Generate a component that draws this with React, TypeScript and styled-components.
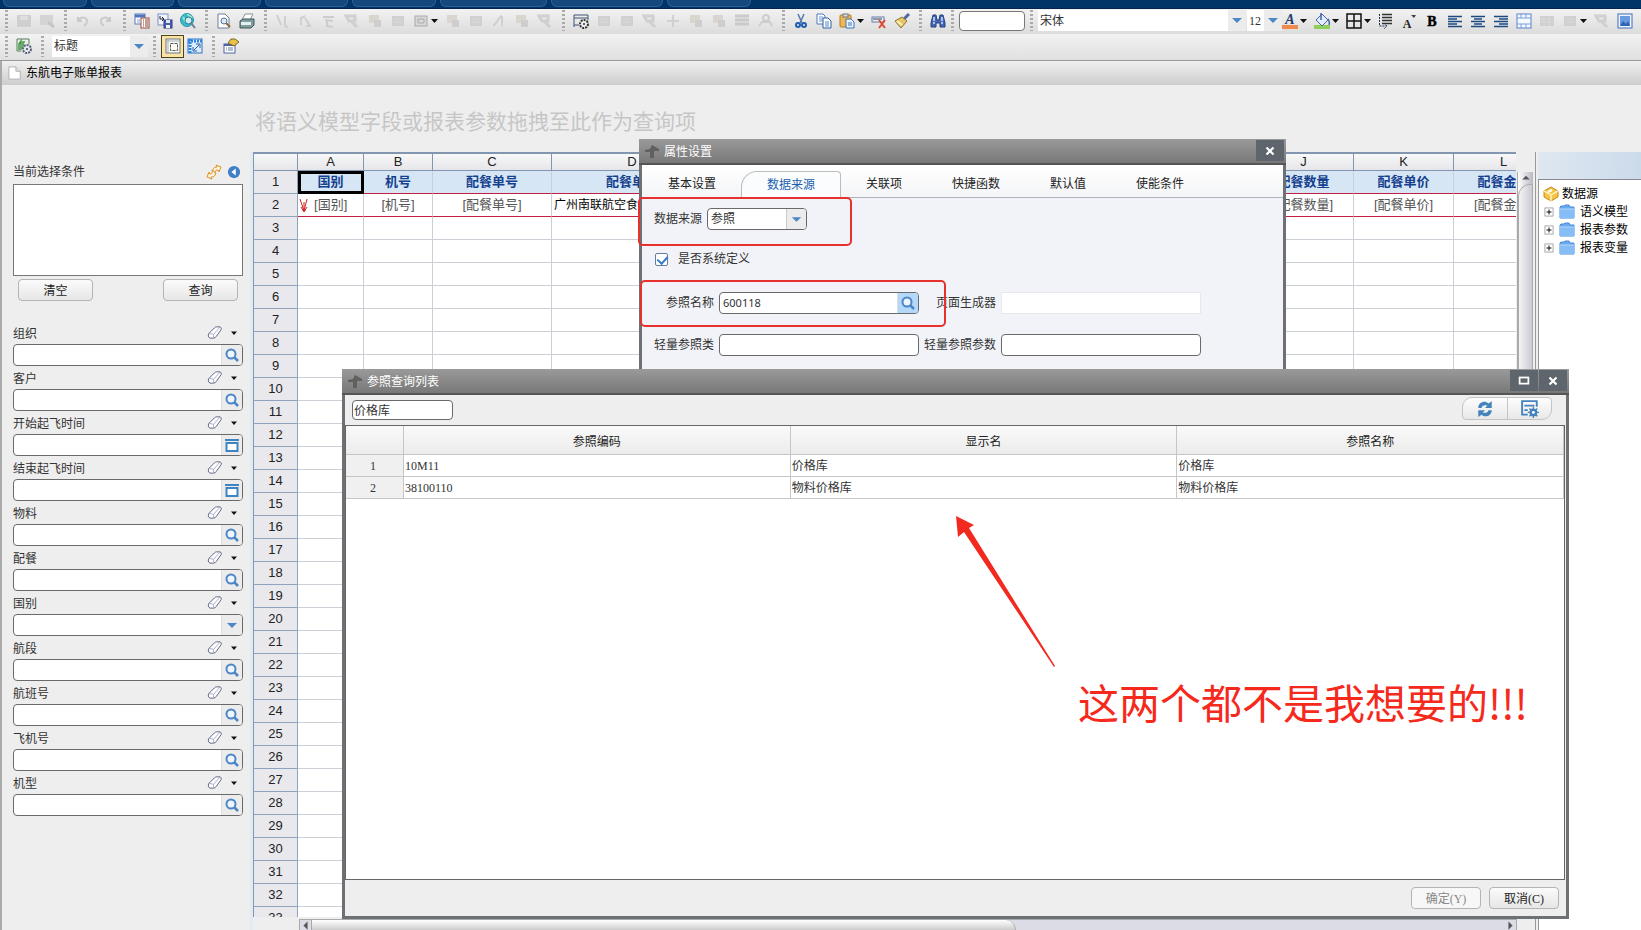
import React from 'react';
import styled, { createGlobalStyle, css } from 'styled-components';

const sans = '"Liberation Sans", "Noto Sans CJK SC", sans-serif';
const song = '"Liberation Serif", "Noto Sans CJK SC", serif';

const GlobalStyle = createGlobalStyle`
  * { box-sizing: border-box; }
  body { margin: 0; background: #eeeeee; font: 12px/16px ${song}; color: #333; overflow: hidden; }
  button, input, select, textarea { font: inherit; color: inherit; margin: 0; padding: 0; }
`;

/* ---------- icons ---------- */

const P = (d: string, stroke = '#333', w = 1, fill = 'none') => (
  <path d={d} stroke={stroke} strokeWidth={w} fill={fill} />
);

const icons: Record<string, React.ReactNode> = {
  save: <><rect x="1" y="2" width="14" height="12" fill="#cfcfcf" /><rect x="4" y="3" width="8" height="4" fill="#dedede" /></>,
  saveAs: <><rect x="1" y="2" width="13" height="10" fill="#d4d4d4" /><path d="M9 9l6 5" stroke="#c6c6c6" strokeWidth="3" /></>,
  undo: P('M3 4v4h4M3 8c3-5 9-4 9 0 0 3-2 4-3 5', '#cacaca', 2),
  redo: P('M12 4v4H8M12 8C9 3 3 4 3 8c0 2 1 4 3 4', '#cacaca', 2),
  fade1: P('M2 2l4 10M10 3v9q0 2 3 2', '#cfcfcf', 2),
  fade2: P('M3 12V5l4-2M7 5l5 8H8', '#cfcfcf', 2),
  fade3: P('M2 4h11M4 7l8 1M6 8v5l6 1', '#cdcdcd', 2),
  fade4: P('M2 3h9v5H5zM7 8l6 6', '#d0d0d0', 3),
  fade5: <><rect x="2" y="2" width="10" height="8" fill="#d9d5cf" /><rect x="7" y="7" width="7" height="7" fill="#cecece" /></>,
  fade6: <><rect x="2" y="3" width="12" height="10" fill="#d0d0d0" /><path d="M4 6h8M4 9h8" stroke="#dadada" /></>,
  fade7: <><rect x="2" y="3" width="12" height="10" fill="#d8d8d8" stroke="#aaa" /><path d="M5 6h6v4H5z" fill="none" stroke="#aaa" /></>,
  fade8: P('M2 12c4 0 5-8 9-9M11 3v10', '#d0d0d0', 2),
  fade9: P('M8 2v12M2 8h12', '#d0d0d0', 2),
  lines: P('M1 3h14M1 7h14M1 11h14', '#cacaca', 3),
  person: <><circle cx="9" cy="5" r="3" fill="none" stroke="#cdcdcd" strokeWidth="2" /><path d="M2 13l3-4h8l2 4" stroke="#cdcdcd" strokeWidth="2" fill="none" /></>,
  report: <><rect x="1" y="1" width="10" height="10" fill="#fff" stroke="#5c78b8" /><path d="M1 3h10" stroke="#4f75c4" strokeWidth="3" /><path d="M3 7h3M3 9h3" stroke="#8ca4d4" /><rect x="7" y="5" width="8" height="10" fill="#fff" stroke="#8f4a3a" /><path d="M9 7h1m1 0h3M9 9h1m1 0h3M9 11h1m1 0h3M9 13h1m1 0h3" stroke="#8d3a2a" /></>,
  exportDisk: <><rect x="1" y="1" width="10" height="11" fill="#eef3fc" stroke="#7c90c0" /><path d="M3 3v3h4M5 4l2 2-2 2" stroke="#222" fill="none" /><rect x="7" y="7" width="8" height="8" fill="#4b5cae" stroke="#333c80" /><rect x="9" y="7" width="4" height="3" fill="#dfe4f6" /><rect x="9" y="12" width="4" height="3" fill="#f3f3f3" /></>,
  globe: <><circle cx="7" cy="7" r="6.500" fill="#38b9cc" stroke="#2897ae" /><path d="M3 4c2 2 1 4 3 5M8 1c0 3 3 2 4 4" stroke="#9ce6c0" strokeWidth="2" fill="none" /><circle cx="8.500" cy="7.500" r="3.500" fill="#c9eef4" stroke="#2a7690" /><path d="M11 10l4 5" stroke="#6b7b8d" strokeWidth="2" /></>,
  preview: <><path d="M2 1h7l4 4v10H2z" fill="#fff" stroke="#6e7d99" /><circle cx="8" cy="8" r="3" fill="#d9ecf7" stroke="#5b7390" /><path d="M10 10l4 4" stroke="#8b6b3c" strokeWidth="2" /></>,
  print: <><path d="M6 1h8l-3 6H3z" fill="#fff" stroke="#8a949c" /><path d="M1 8l3-2h11v6l-3 3H1z" fill="#7f9d9d" stroke="#3d5558" /><path d="M2 9h10v3H2z" fill="#e4f0ee" /></>,
  windowGear: <><path d="M1 14V2h14v5M1 5h14M1 12h5" stroke="#3d5478" fill="none" /><circle cx="11" cy="11" r="4" fill="#eee" stroke="#333" strokeDasharray="2 1" strokeWidth="2" /><circle cx="11" cy="11" r="1" fill="#333" /></>,
  cut: <><path d="M5 1l4 9M11 1L7 10" stroke="#5578a8" strokeWidth="1.500" /><circle cx="5" cy="12" r="2" fill="none" stroke="#1f5fae" strokeWidth="2" /><circle cx="11" cy="12" r="2" fill="none" stroke="#1f5fae" strokeWidth="2" /></>,
  copy: <><path d="M1 1h6l2 2v8H1z" fill="#fff" stroke="#4d78b8" /><path d="M3 4h4M3 6h4M3 8h4" stroke="#6f93cc" /><path d="M7 5h5l3 3v7H7z" fill="#fff" stroke="#2d5fa8" /><path d="M9 9h4M9 11h4M9 13h4" stroke="#5b86c8" /></>,
  paste: <><rect x="1" y="2" width="11" height="12" rx="1" fill="#f0b653" stroke="#b07a23" /><rect x="4" y="1" width="5" height="3" fill="#d8dce2" stroke="#777" /><path d="M7 6h5l3 3v6H7z" fill="#eaf4ff" stroke="#3b74bc" /><path d="M9 10h4M9 12h4" stroke="#3b74bc" /></>,
  removeRow: <><rect x="1" y="4" width="12" height="5" fill="#e9eff8" stroke="#6a7da0" /><path d="M2 6h9" stroke="#33425e" /><path d="M8 7l6 8M14 7l-6 8" stroke="#dc4a30" strokeWidth="2" /></>,
  brush: <><path d="M15 1l-5 5" stroke="#4d67a4" strokeWidth="3" /><path d="M8 4l5 4-6 7-6-7z" fill="#e5c768" stroke="#8d7630" /><path d="M3 8l5 4" stroke="#fff3bb" strokeWidth="2" /></>,
  find: <><path d="M3 2h3l1 5h2l1-5h3l2 8v4h-5v-4H6v4H1v-4z" fill="#4567b4" stroke="#24407f" /><path d="M3 10h2M11 10h2M4 4v4M12 4v4" stroke="#cfe0ff" strokeWidth="1.500" /></>,
  fontColor: <><text x="8" y="11" textAnchor="middle" fontSize="14" fontWeight="bold" fontStyle="italic" fill="#1d3b6c" fontFamily="Liberation Serif">A</text><rect y="12" width="16" height="4" fill="#f08a4c" /></>,
  fillColor: <><rect y="12" width="16" height="4" fill="#8fd05a" /><path d="M8 1l6 6-6 6-6-6z" fill="#e2ecfb" stroke="#4667a5" /><path d="M7 0v7M14 6q2 3 1 6" stroke="#4667a5" strokeWidth="1.500" /></>,
  border: P('M1 1h14v14H1zM8 1v14M1 8h14', '#111', 1.5),
  spacing: <><path d="M4 1.500h10M4 4.500h10M4 7.500h10M4 10.500h10" stroke="#333" strokeWidth="1.500" /><path d="M1.500 1v12H8M6 10l3 3-3 3" stroke="#1d2f57" strokeDasharray="2 1" fill="none" /></>,
  superA: <><text x="6" y="15" textAnchor="middle" fontSize="12" fontWeight="bold" fill="#222" fontFamily="Liberation Serif">A</text><path d="M10 2h5l-2 3z" fill="#444" /></>,
  bold: <text x="8" y="13" textAnchor="middle" fontSize="14" fontWeight="bold" fill="#000" stroke="#000" strokeWidth="0.5" fontFamily="Liberation Serif">B</text>,
  left: P('M1 3.500h14M1 6h9M1 8.500h14M1 11h9M1 13.500h14', '#1d4a80', 1.3),
  center: P('M1 3.500h14M4 6h8M1 8.500h14M4 11h8M1 13.500h14', '#1d4a80', 1.3),
  right: P('M1 3.500h14M6 6h9M1 8.500h14M6 11h9M1 13.500h14', '#1d4a80', 1.3),
  cells: <><rect x="1" y="1" width="14" height="14" fill="#f4f8ff" stroke="#5b82cc" /><path d="M1 5h14M1 11h14M5 1v4M10 1v4M5 11v4M10 11v4" stroke="#7b9ee0" /></>,
  gridOff: <><rect x="1" y="3" width="14" height="10" fill="#cfcfcf" /><path d="M1 6h14M1 9h14M5 3v10M10 3v10" stroke="#dadada" /></>,
  picture: <><rect x="1" y="1" width="14" height="14" fill="#eef5ff" stroke="#3c6db8" /><rect x="3" y="3" width="10" height="10" fill="#6a9be0" /><path d="M3 13l3-5 3 3 2-3 2 5z" fill="#2f62b3" /></>,
  chartGear: <><path d="M1 1h12v5M1 1v12h4" stroke="#5a7a5c" fill="none" /><path d="M3 12V6l2-3v9M7 10V4h2" stroke="#3c9a3e" strokeWidth="1.500" fill="none" /><circle cx="11" cy="11" r="4" fill="#e7e9f2" stroke="#555e78" strokeDasharray="2 1" strokeWidth="2" /><circle cx="11" cy="11" r="1" fill="#444" /></>,
  frame: <><rect x="1" y="1" width="14" height="14" fill="#fdfcf4" stroke="#6c7688" /><path d="M1 3h14M3 1v14" stroke="#a2abbb" /><rect x="5.500" y="5.500" width="7" height="7" fill="none" stroke="#555" strokeDasharray="3 1" /></>,
  freeze: <><rect x="1" y="1" width="14" height="14" fill="#dcecff" stroke="#2f74c6" /><path d="M1 3h14M3 1v14" stroke="#2f86dc" strokeWidth="3" strokeDasharray="2 1" /><path d="M7 12l5-5M9 6h4v4M6 9v4h4" stroke="#2f5ea0" fill="none" /></>,
  card: <><rect x="1" y="6" width="11" height="9" fill="#fff" stroke="#4c63a4" /><path d="M1 7h11" stroke="#4c63a4" strokeWidth="2" /><path d="M3 10h1m1 0h5M3 12h1m1 0h5" stroke="#6b79a8" /><path d="M5 5l3-4h4l4 3-5 4z" fill="#eac24a" stroke="#7d6420" /></>,
  page: <><path d="M1 1h8l5 5v9H1z" fill="#fff" stroke="#aaa" /><path d="M9 1v5h5" fill="#e4e4e4" stroke="#aaa" /></>,
  search: <><circle cx="7" cy="7" r="4.500" fill="#eef5fc" stroke="#4d86c6" strokeWidth="2" /><path d="M10 10l4 4" stroke="#4d86c6" strokeWidth="2.500" /></>,
  date: <><path d="M1 3h14" stroke="#3d84c0" strokeWidth="2" /><rect x="2.500" y="6" width="11" height="8" fill="#fff" stroke="#3d84c0" strokeWidth="2" /></>,
  caretBlue: <path d="M3 6h10l-5 5z" fill="#4d86c6" />,
  caretUp: <path d="M3 10h10L8 5z" fill="#555" />,
  caretLeft: <path d="M11 2v12L5 8z" fill="#555" />,
  caretRight: <path d="M5 2v12l6-6z" fill="#555" />,
  eraser: <><path d="M2 9l6-6q1-1 2-1h4q2 1 1 3l-5 7q-1 2-3 2H3q-3-2-1-5z" fill="#fdfdff" stroke="#59607c" /><path d="M2 9q2 0 5 1l7-8M7 10v4" stroke="#a7aec8" fill="none" /></>,
  refresh: <><path d="M10 1l5 2-2 5-1-2c-3 0-3 2-2 4l-3-1c-1-4 1-6 4-6z" fill="#fff3d8" stroke="#d9932a" /><path d="M6 15l-5-2 2-5 1 2c3 0 2-2 2-4l3 2c1 4-1 5-4 5z" fill="#fff3d8" stroke="#d9932a" /></>,
  collapse: <><circle cx="8" cy="8" r="7" fill="#3f7fc6" /><path d="M10 4v8L5 8z" fill="#fff" /></>,
  vArrow: P('M2 2l4 12L9 2M6 5v9M3 10l3 5 3-5', '#c22', 1),
  cube: <><path d="M8 1l7 4v6l-7 4-7-4V5z" fill="#f6c445" stroke="#c58c1b" /><path d="M1 5l7 4 7-4M8 9v6" stroke="#fff0b5" fill="none" strokeWidth="1.500" /><path d="M5 6l4-2" stroke="#fff" strokeWidth="2" /></>,
  folder: <><path d="M1 3l1-1h3l1-1h4l1 2h4v11H1z" fill="#6caaf0" stroke="#4b8bd6" /><path d="M1 5h14v9H1z" fill="#86bdf6" /><path d="M1 5h14" stroke="#b5d8fb" /></>,
  plus: <><rect x="1.500" y="1.500" width="13" height="13" fill="#fff" stroke="#777" /><path d="M4 8h8M8 4v8" stroke="#000" strokeWidth="1.500" /></>,
  windowMark: <path d="M8 2l7 4v2h-5v7H6V9H1V7l5-1z" fill="#606060" />,
  close: P('M4 4l8 8M12 4l-8 8', '#fff', 2.5),
  maximize: <rect x="3" y="4" width="10" height="7" fill="none" stroke="#fff" strokeWidth="2" />,
  sync: <path d="M2 7c0-5 6-7 9-4l3-2v6H8l2-2c-2-1-5 0-5 2zM14 9c0 5-6 7-9 4l-3 2V9h6l-2 2c2 1 5 0 5-2z" fill="#4483bd" />,
  formGear: <><path d="M6 13H1V1h13v5M3 5h9M3 9h3" stroke="#4483bd" strokeWidth="1.700" fill="none" /><circle cx="11" cy="11" r="2.500" fill="none" stroke="#4483bd" strokeWidth="2" /><path d="M11 6v10M6 11h10M7.500 7.500l7 7M14.500 7.500l-7 7" stroke="#4483bd" strokeWidth="1.200" /><circle cx="11" cy="11" r="1.300" fill="#fff" /></>,
  caretBlack: <path d="M2 5h12l-6 7z" fill="#111" />,
};

const Svg = styled.svg`display: block; flex: none;`;
const Icon = ({ name, size = 16 }: { name: string; size?: number }) => (
  <Svg width={size} height={size} viewBox="0 0 16 16" fill="none" aria-hidden>{icons[name]}</Svg>
);

/* ---------- top bars ---------- */

const App = styled.div`
  position: relative; display: flex; flex-direction: column; height: 100vh;
  overflow: hidden; background: #eeeeee;
`;
const ModuleTabs = styled.nav`
  display: flex; gap: 4px; height: 9px; padding-left: 3px; flex: none;
  background: #013467; border-bottom: 1px solid #02264f;
`;
const ModuleTab = styled.a<{ $w: number }>`
  width: ${p => p.$w}px; height: 7px; background: #15487c;
  border: 1px solid #2d5f93; border-top: 0; border-radius: 0 0 6px 6px;
`;
const Toolbar = styled.div<{ $tall?: boolean }>`
  display: flex; align-items: center; gap: 7px; flex: none;
  height: ${p => (p.$tall ? 27 : 25)}px; padding: 0 0 2px 5px;
  background: linear-gradient(${p => (p.$tall ? '#f2f2f2, #e0e0e0' : '#f2f2f2, #dcdcdc')});
  ${p => p.$tall && 'border-bottom: 1px solid #999;'}
`;
const Divider = styled.span<{ $tight?: boolean }>`
  width: 3px; height: 21px; flex: none; margin: 0 ${p => (p.$tight ? '-2px' : '1px 0 2px')};
  background: repeating-linear-gradient(#aaa 0 2px, transparent 2px 4px);
  &:first-child { margin-left: 0; }
`;
const ToolButton = styled.button<{ $on?: boolean }>`
  display: flex; align-items: center; gap: 2px; border: 0; background: none; flex: none;
  ${p => p.$on && css`
    width: 23px; height: 23px; justify-content: center; background: #fbe3a4; border: 1px solid #4d431f;
    margin-right: -4px;
  `}
`;
const Caret = () => (
  <Svg width="7" height="4" viewBox="0 0 7 4" aria-hidden><path d="M0 0h7L3.500 4z" fill="#111" /></Svg>
);
const SearchBox = styled.input`
  width: 66px; height: 20px; flex: none; border: 1px solid #777; border-radius: 4px; background: #fff; padding: 0 4px;
`;
const Pick = styled.span<{ $w: number }>`
  position: relative; flex: none; width: ${p => p.$w}px; height: 21px; background: #ececec;
  select {
    appearance: none; width: calc(100% - 18px); height: 100%; border: 0;
    border-radius: 0; background: #fff; padding-left: 2px; display: block;
  }
  svg { position: absolute; right: 1px; top: 2px; pointer-events: none; }
`;
const Picker = ({ label, value, width }: { label: string; value: string; width: number }) => (
  <Pick $w={width}>
    <select aria-label={label}><option>{value}</option></select>
    <Icon name="caretBlue" />
  </Pick>
);
const FontGroup = styled.span`display: flex; gap: 1px; flex: none; margin-right: -7px;`;

const Tool = ({ name, menu, on }: { name: string; menu?: boolean; on?: boolean }) => (
  <ToolButton type="button" aria-label={name} $on={on}><Icon name={name} />{menu && <Caret />}</ToolButton>
);
const tools = (names: string) => names.split(' ').map((n, i) => (
  <Tool key={i} name={n.replace('+', '')} menu={n.endsWith('+')} />
));

const DocumentTitle = styled.header`
  display: flex; align-items: center; gap: 4px; height: 24px; flex: none; padding-left: 6px;
  border-left: 2px solid #aaa; background: linear-gradient(#f0f0f0, #cdcdcd); color: #000;
`;

/* ---------- query sidebar ---------- */

const Body = styled.div`display: flex; flex: 1; min-height: 0; border-left: 2px solid #aaa;`;
const Sidebar = styled.aside`width: 248px; flex: none; padding: 76px 7px 0 11px; overflow: hidden;`;
const SidebarHead = styled.div`
  display: flex; align-items: center; gap: 5px; height: 21px; padding-right: 2px; margin-bottom: 2px;
  label { flex: 1; }
  button { border: 0; background: none; }
`;
const Conditions = styled.textarea`
  display: block; width: 230px; height: 92px; border: 1px solid #777; background: #fff; resize: none;
`;
const ButtonRow = styled.div`display: flex; justify-content: space-between; padding: 3px 5px 0;  width: 230px;`;
const PushButton = styled.button<{ $w: number }>`
  width: ${p => p.$w}px; height: 22px; border: 1px solid #b4b4b4; border-radius: 4px;
  background: linear-gradient(#fbfbfb, #e6e6e6); color: #222; padding-top: 1px;
  &:disabled { color: #888; background: #f7f7f7; }
`;
const Fields = styled.div`margin-top: 21px; width: 230px;`;
const Field = styled.div`height: 45px;`;
const FieldHead = styled.div`
  display: flex; align-items: center; gap: 8px; height: 22px; padding: 0 5px 1px 0;
  label { flex: 1; padding-top: 2px; }
  button { border: 0; background: none; }
`;
const InputWrap = styled.div<{ $w?: number; $hot?: boolean }>`
  display: flex; width: ${p => p.$w ?? 230}px; height: 22px; overflow: hidden;
  border: 1px solid #6a6a6a; border-radius: 4px; background: #fff;
  input { flex: 1; min-width: 0; border: 0; background: none; padding: 0 3px; outline: 0; font-family: "Noto Sans", sans-serif; font-size: 11px; }
  button {
    display: grid; place-items: center; width: 21px; border: 0; border-left: 1px solid #ddd;
    background: ${p => (p.$hot ? '#b4d8fa' : '#ececec')};
  }
`;
const queryFields: [string, string][] = [
  ['组织', 'search'], ['客户', 'search'], ['开始起飞时间', 'date'], ['结束起飞时间', 'date'],
  ['物料', 'search'], ['配餐', 'search'], ['国别', 'caretBlue'], ['航段', 'search'],
  ['航班号', 'search'], ['飞机号', 'search'], ['机型', 'search'],
];

/* ---------- sheet ---------- */

const Work = styled.main`display: flex; flex-direction: column; flex: 1; min-width: 0;`;
const DropHint = styled.p`
  margin: 0; height: 67px; flex: none; padding: 22px 0 0 5px; font: 21px/30px ${sans}; color: #c6c6c6;
`;
const Split = styled.div`display: flex; flex: 1; min-height: 0;`;
const SheetArea = styled.section`
  display: flex; flex-direction: column; flex: 1; min-width: 0; padding-left: 3px;
  background: #e2ebf4; border-right: 1px solid #999;
`;
const SheetRow = styled.div`display: flex; flex: 1; min-height: 0; background: #eeeeee;`;
const Viewport = styled.div`flex: 1; min-width: 0; overflow: hidden; background: #fff;`;
const Sheet = styled.table`
  table-layout: fixed; width: 1300px; border-collapse: separate; border-spacing: 0;
  border-left: 1px solid #8296b0; font: 13px/16px ${sans};
  th, td { padding: 0; text-align: center; overflow: hidden; white-space: nowrap; height: 23px; }
  thead th {
    height: 19px; font-weight: normal; color: #222; background: linear-gradient(#f8f8f8, #e6e6ea);
    border: solid #8296b0; border-width: 2px 1px 1px 0;
  }
  tbody th {
    font-weight: normal; color: #222; background: #e9e9ed; border: solid #8fa3bd; border-width: 0 1px 1px 0;
  }
  td { border: solid #cdcfd6; border-width: 0 1px 1px 0; }
`;
const HeadCell = styled.td<{ $sel?: boolean }>`
  && { background: #d6e6f5; color: #14408e; font-weight: bold; border-bottom-color: #c21f42; }
  ${p => p.$sel && 'outline: 3px solid #000; outline-offset: -3px;'}
`;
const DataCell = styled.td<{ $plain?: boolean }>`
  && { border-bottom: 1px solid #c21f42; color: #555; }
  ${p => p.$plain && '&& { color: #000; font-size: 12px; text-align: left; padding-left: 2px; }'}
  span { display: flex; align-items: center; }
`;
const ScrollV = styled.div`
  width: 16px; flex: none; margin: 20px 2px 0 1px; border-left: 1px solid #aaa;
  background: linear-gradient(90deg, #fff, #b9b9c4);
  svg { margin: 0 auto; }
`;
const Thumb = styled.div`height: 700px; border: 1px solid #aaa; border-radius: 12px 0 0 0; background: linear-gradient(90deg, #f4f4f6, #cacad2);`;
const ScrollH = styled.div`
  display: flex; height: 11px; flex: none; margin: 0 18px 0 46px; border: 1px solid #aaa; border-bottom: 0; background: #dcdce6;
  overflow: hidden;
`;
const ThumbH = styled.div`flex: none; width: 58%; margin-right: auto; border: solid #aaa; border-width: 0 1px; border-radius: 0 10px 0 0; background: linear-gradient(#fff, #ccc);`;
const ScrollBase = styled.div`background: #eeeeee; flex: none; padding-top: 2px;`;

const columns = [
  ['A', 66, '国别'], ['B', 69, '机号'], ['C', 119, '配餐单号'], ['D', 161, '配餐单号'], ['E', 108, '航班号'],
  ['F', 108, '航段'], ['G', 108, '飞机号'], ['H', 108, '机型'], ['I', 109, '物料'], ['J', 100, '配餐数量'],
  ['K', 100, '配餐单价'], ['L', 100, '配餐金额'],
] as const;
const rowNumbers = Array.from({ length: 31 }, (_, i) => i + 3);

/* ---------- data source tree ---------- */

const SourcePanel = styled.aside`
  width: 105px; flex: none; display: flex; flex-direction: column; padding-left: 2px; background: #eeeeee;
`;
const SourceHead = styled.div`height: 28px; background: linear-gradient(100deg, #dfe8f1, #cbdaea); border-bottom: 1px solid #889; flex: none;`;
const Tree = styled.ul`
  flex: 1; margin: 0; padding: 5px 0 0 4px; list-style: none; background: #fff; border-left: 1px solid #999; color: #000;
  li { display: flex; align-items: center; gap: 3px; height: 18px; white-space: nowrap; }
`;
const TreeBranch = styled.li`
  && { gap: 5px; padding-left: 1px; }
`;

/* ---------- dialogs ---------- */

const Dialog = styled.section`
  position: absolute; display: flex; flex-direction: column; background: #eeeeee;
  border: solid #6d7074; border-width: 0 3px;
`;
const PropertyDialog = styled(Dialog)`left: 639px; top: 139px; width: 647px; height: 240px; background: #f2f3f8;`;
const LookupDialog = styled(Dialog)`left: 342px; right: 72px; top: 369px; bottom: 11px; border-bottom-width: 3px;`;
const TitleBar = styled.header`
  display: flex; height: 26px; flex: none; margin: 0 -3px; padding: 0 2px 0 5px; color: #fff;
  background: linear-gradient(#9a9a9a, #787878); border-bottom: 2px solid #555;
  h2 { flex: 1; margin: 0; padding: 5px 0 0 4px; font: 12px/16px ${sans}; }
  > svg { margin-top: 4px; }
`;
const WindowButton = styled.button`
  display: grid; place-items: center; width: 28px; height: 21px; margin: 1px 0 0 1px; border: 0; background: #5e656c;
`;
const Tabs = styled.div`
  display: flex; height: 33px; flex: none; padding: 6px 0 0 1px; background: linear-gradient(#fff, #f4f5f7);
  border-bottom: 1px solid #aab4bf;
`;
const Tab = styled.button<{ $active?: boolean }>`
  padding: 0 25px; border: 0; background: none; white-space: nowrap; color: #222;
  ${p => p.$active && css`
    margin-bottom: -1px; color: #1a60b0; background: #fbfcfd; border: solid #bcbcbc; border-width: 1px 1px 0;
    border-radius: 16px 4px 0 0;
  `}
`;
const Form = styled.div`
  display: grid; grid-template-columns: 60px 200px 72px 200px; gap: 20px 5px; padding: 10px 0 0 12px; align-items: center;
  label { text-align: right; white-space: nowrap; line-height: 22px; }
`;
const FullRow = styled.div`
  grid-column: 1 / -1; display: flex; align-items: center; gap: 5px; height: 22px;
`;
const CheckRow = styled(FullRow)`gap: 10px; padding: 0 0 4px 1px;`;
const Check = styled.input`
  appearance: none; width: 13px; height: 13px; border: 1px solid #657d9b; border-radius: 2px; background: #fff; position: relative;
  &:checked::after {
    content: ''; position: absolute; left: 3px; top: 0; width: 5px; height: 8px;
    border: solid #347bc0; border-width: 0 2px 2px 0; transform: rotate(42deg);
  }
`;
const SourceSelect = styled.span`
  position: relative; width: 100px; height: 22px; border: 1px solid #6a6a6a; border-radius: 4px; background: #fff;
  overflow: hidden; display: flex;
  select { appearance: none; width: 78px; border: 0; background: none; padding-left: 3px; }
  svg { width: 20px; padding: 0 2px; height: 20px; border-left: 1px solid #ccc; background: #ececec; pointer-events: none; }
`;
const TextField = styled.input<{ $faint?: boolean }>`
  width: 200px; height: 22px; padding: 0 4px; background: #fff;
  border: 1px solid ${p => (p.$faint ? '#e8e8ec' : '#6a6a6a')}; border-radius: ${p => (p.$faint ? 0 : 4)}px;
`;
const LookupBar = styled.div`
  display: flex; align-items: flex-start; justify-content: space-between; height: 30px; flex: none; padding: 5px 14px 0 7px;
  input { width: 101px; height: 20px; padding: 0 1px; border: 1px solid #6a6a6a; border-radius: 4px; background: #fff; }
`;
const Pill = styled.div`
  display: flex; margin-top: -3px; height: 23px; border: 1px solid #c4c4c4; border-radius: 10px 4px; overflow: hidden;
  background: linear-gradient(#fdfdfd, #e8e8e8);
  button { width: 44px; display: grid; place-items: center; border: 0; background: none; }
  button + button { border-left: 1px solid #c4c4c4; }
`;
const ResultArea = styled.div`
  flex: 1; min-height: 0; background: #fff; border: 1px solid #666; margin-right: 1px; overflow: hidden;
`;
const ResultTable = styled.table`
  width: 100%; table-layout: fixed; border-collapse: separate; border-spacing: 0;
  th, td { border: solid #c6c6c6; border-width: 0 1px 1px 0; padding: 0 1px; height: 22px; text-align: left; font-weight: normal; }
  thead th { height: 29px; padding-top: 3px; text-align: center; background: linear-gradient(#fafafa, #ececec); font-family: ${sans}; color: #222; }
  tbody th { text-align: center; background: #f0f0f0; padding-right: 4px; }
`;
const DialogFooter = styled.footer`
  display: flex; justify-content: flex-end; gap: 8px; height: 36px; flex: none; padding: 7px 7px 0 0;
`;

/* ---------- red mark-up ---------- */

const MarkBox = styled.div<{ $x: number; $y: number; $w: number; $h: number }>`
  position: absolute; left: ${p => p.$x}px; top: ${p => p.$y}px; width: ${p => p.$w}px; height: ${p => p.$h}px;
  border: 2px solid #e8302c; border-radius: 5px; pointer-events: none;
`;
const MarkArrow = styled.svg`position: absolute; left: 950px; top: 510px; pointer-events: none;`;
const MarkText = styled.p`
  position: absolute; left: 1078px; top: 671px; margin: 0; white-space: nowrap;
  font: 41px/60px "Noto Sans CJK SC", sans-serif; color: #f5291c;
`;

export default function ReportDesigner() {
  return (
    <App>
      <GlobalStyle />
      <ModuleTabs aria-label="modules">
        {[84, 83, 83, 83, 84, 107, 112, 84].map((w, i) => <ModuleTab key={i} href="#" $w={w} />)}
      </ModuleTabs>

      <Toolbar role="toolbar">
        <Divider />{tools('save saveAs')}
        <Divider />{tools('undo redo')}
        <Divider />{tools('report exportDisk globe')}
        <Divider />{tools('preview print')}
        <Divider />{tools('fade1 fade2 fade3 fade4 fade5 fade6 fade7+ fade5 fade6 fade8 fade5 fade4')}
        <Divider />{tools('windowGear fade6 fade6 fade4 fade9 fade5 fade5 lines person')}
        <Divider />{tools('cut copy paste+ removeRow brush')}
        <Divider />{tools('find')}
        <Divider $tight /><SearchBox aria-label="search" />
        <Divider $tight />
        <FontGroup>
          <Picker label="font" value="宋体" width={208} />
          <Picker label="size" value="12" width={35} />
        </FontGroup>
        {tools('fontColor+ fillColor+ border+ spacing superA bold left center right cells gridOff fade6+ fade4 picture')}
      </Toolbar>
      <Toolbar role="toolbar" $tall>
        <Divider />{tools('chartGear')}
        <Divider /><Picker label="style" value="标题" width={96} />
        <Divider $tight /><Tool name="frame" on />{tools('freeze')}
        <Divider />{tools('card')}
      </Toolbar>
      <DocumentTitle><Icon name="page" size={14} />东航电子账单报表</DocumentTitle>

      <Body>
        <Sidebar>
          <SidebarHead>
            <label htmlFor="conditions">当前选择条件</label>
            <button type="button" aria-label="refresh"><Icon name="refresh" /></button>
            <button type="button" aria-label="collapse"><Icon name="collapse" size={14} /></button>
          </SidebarHead>
          <Conditions id="conditions" />
          <ButtonRow>
            <PushButton type="button" $w={75}>清空</PushButton>
            <PushButton type="button" $w={75}>查询</PushButton>
          </ButtonRow>
          <Fields>
            {queryFields.map(([name, icon], i) => (
              <Field key={name}>
                <FieldHead>
                  <label htmlFor={`q${i}`}>{name}</label>
                  <button type="button" aria-label="clear"><Icon name="eraser" size={15} /></button>
                  <button type="button" aria-label="menu"><Icon name="caretBlack" size={8} /></button>
                </FieldHead>
                <InputWrap>
                  <input id={`q${i}`} />
                  <button type="button" aria-label={icon}><Icon name={icon} /></button>
                </InputWrap>
              </Field>
            ))}
          </Fields>
        </Sidebar>

        <Work>
          <DropHint>将语义模型字段或报表参数拖拽至此作为查询项</DropHint>
          <Split>
            <SheetArea>
              <SheetRow>
                <Viewport>
                  <Sheet>
                    <colgroup>
                      <col style={{ width: 44 }} />
                      {columns.map(([id, w]) => <col key={id} style={{ width: w }} />)}
                    </colgroup>
                    <thead>
                      <tr><th />{columns.map(([id]) => <th key={id} scope="col">{id}</th>)}</tr>
                    </thead>
                    <tbody>
                      <tr>
                        <th scope="row">1</th>
                        {columns.map(([id, , title]) => <HeadCell key={id} $sel={id === 'A'}>{title}</HeadCell>)}
                      </tr>
                      <tr>
                        <th scope="row">2</th>
                        {columns.map(([id, , title]) => (
                          id === 'D'
                            ? <DataCell key={id} $plain>广州南联航空食品有限公司</DataCell>
                            : <DataCell key={id}>{id === 'A' ? <span><Icon name="vArrow" />[{title}]</span> : `[${title}]`}</DataCell>
                        ))}
                      </tr>
                      {rowNumbers.map(n => (
                        <tr key={n}><th scope="row">{n}</th>{columns.map(([id]) => <td key={id} />)}</tr>
                      ))}
                    </tbody>
                  </Sheet>
                </Viewport>
                <ScrollV><Icon name="caretUp" size={12} /><Thumb /></ScrollV>
              </SheetRow>
              <ScrollBase>
                <ScrollH><Icon name="caretLeft" size={11} /><ThumbH /><Icon name="caretRight" size={11} /></ScrollH>
              </ScrollBase>
            </SheetArea>
            <SourcePanel>
              <SourceHead />
              <Tree>
                <li><Icon name="cube" />数据源</li>
                {['语义模型', '报表参数', '报表变量'].map(t => (
                  <TreeBranch key={t}><Icon name="plus" size={10} /><Icon name="folder" />{t}</TreeBranch>
                ))}
              </Tree>
            </SourcePanel>
          </Split>
        </Work>
      </Body>

      <PropertyDialog role="dialog" aria-label="属性设置">
        <TitleBar>
          <Icon name="windowMark" />
          <h2>属性设置</h2>
          <WindowButton type="button" aria-label="close"><Icon name="close" size={14} /></WindowButton>
        </TitleBar>
        <Tabs role="tablist">
          {['基本设置', '数据来源', '关联项', '快捷函数', '默认值', '使能条件'].map((t, i) => (
            <Tab key={t} type="button" role="tab" aria-selected={i === 1} $active={i === 1}>{t}</Tab>
          ))}
        </Tabs>
        <Form>
          <FullRow>
            <label htmlFor="source">数据来源</label>
            <SourceSelect>
              <select id="source"><option>参照</option></select>
              <Icon name="caretBlue" />
            </SourceSelect>
          </FullRow>
          <CheckRow>
            <Check id="system" type="checkbox" defaultChecked />
            <label htmlFor="system">是否系统定义</label>
          </CheckRow>
          <label htmlFor="refName">参照名称</label>
          <InputWrap $w={200} $hot>
            <input id="refName" defaultValue="600118" />
            <button type="button" aria-label="search"><Icon name="search" /></button>
          </InputWrap>
          <label htmlFor="generator">页面生成器</label>
          <TextField id="generator" $faint />
          <label htmlFor="lightClass">轻量参照类</label>
          <TextField id="lightClass" />
          <label htmlFor="lightParam">轻量参照参数</label>
          <TextField id="lightParam" />
        </Form>
      </PropertyDialog>

      <LookupDialog role="dialog" aria-label="参照查询列表">
        <TitleBar>
          <Icon name="windowMark" />
          <h2>参照查询列表</h2>
          <WindowButton type="button" aria-label="maximize"><Icon name="maximize" size={14} /></WindowButton>
          <WindowButton type="button" aria-label="close"><Icon name="close" size={14} /></WindowButton>
        </TitleBar>
        <LookupBar>
          <input aria-label="keyword" defaultValue="价格库" />
          <Pill>
            <button type="button" aria-label="reload"><Icon name="sync" size={18} /></button>
            <button type="button" aria-label="settings"><Icon name="formGear" size={18} /></button>
          </Pill>
        </LookupBar>
        <ResultArea>
          <ResultTable>
            <colgroup><col style={{ width: 58 }} /><col /><col /><col /></colgroup>
            <thead>
              <tr><th /><th scope="col">参照编码</th><th scope="col">显示名</th><th scope="col">参照名称</th></tr>
            </thead>
            <tbody>
              <tr><th scope="row">1</th><td>10M11</td><td>价格库</td><td>价格库</td></tr>
              <tr><th scope="row">2</th><td>38100110</td><td>物料价格库</td><td>物料价格库</td></tr>
            </tbody>
          </ResultTable>
        </ResultArea>
        <DialogFooter>
          <PushButton type="button" $w={70} disabled>确定(Y)</PushButton>
          <PushButton type="button" $w={70}>取消(C)</PushButton>
        </DialogFooter>
      </LookupDialog>

      <MarkBox $x={638} $y={197} $w={214} $h={49} />
      <MarkBox $x={640} $y={280} $w={306} $h={47} />
      <MarkArrow width="110" height="160" viewBox="0 0 110 160" aria-hidden>
        <path d="M6 6l18 9-5 3 86 138-1 1L14 22l-6 5z" fill="#f2291e" />
      </MarkArrow>
      <MarkText>这两个都不是我想要的!!!</MarkText>
    </App>
  );
}
